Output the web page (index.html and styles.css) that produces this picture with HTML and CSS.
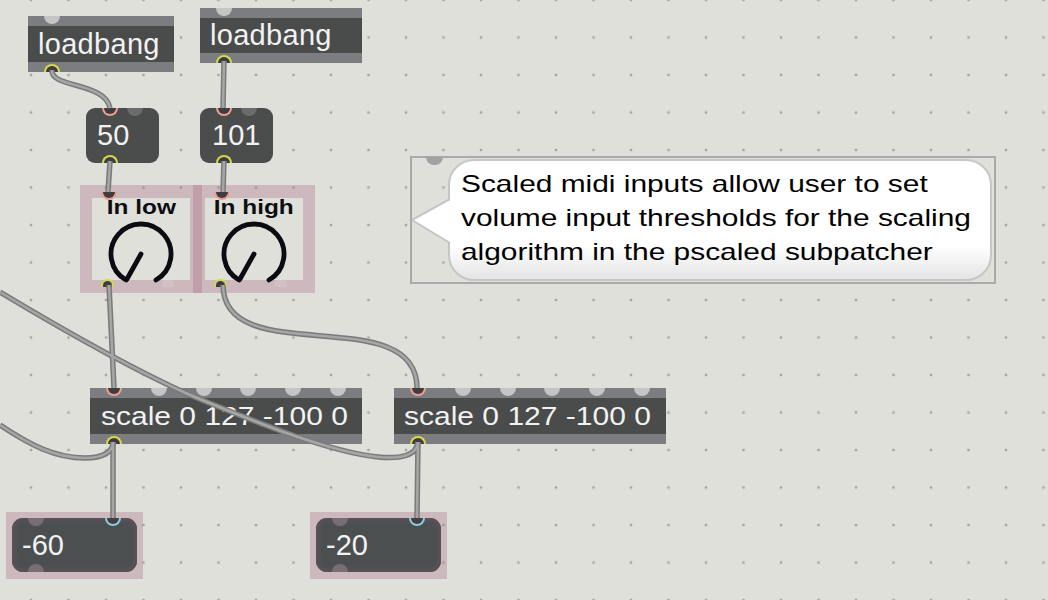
FILE: index.html
```html
<!DOCTYPE html>
<html lang="en">
<head>
<meta charset="UTF-8">
<title>pscaled patcher</title>
<link rel="stylesheet" href="styles.css">
</head>
<body>

<div class="patch">

  <!-- loadbang objects -->
  <div class="obj box lb1">
    <div class="bar"></div>
    <div class="label">loadbang</div>
    <div class="bar"></div>
    <div class="ports t"><span class="port hole"></span></div>
    <div class="ports b"><span class="port out"></span></div>
  </div>

  <div class="obj box lb2">
    <div class="bar"></div>
    <div class="label">loadbang</div>
    <div class="bar"></div>
    <div class="ports t"><span class="port hole"></span></div>
    <div class="ports b"><span class="port out"></span></div>
  </div>

  <!-- number boxes -->
  <div class="obj num n50">
    50
    <div class="ports t"><span class="port in"></span><span class="port dim"></span></div>
    <div class="ports b"><span class="port out"></span></div>
  </div>

  <div class="obj num n101">
    101
    <div class="ports t"><span class="port in"></span><span class="port dim"></span></div>
    <div class="ports b"><span class="port out"></span></div>
  </div>

  <!-- dials -->
  <div class="obj dial dial1">
    <div class="dial-name"><span>In low</span></div>
    <svg class="knob" width="98" height="62">
      <path d="M 34 63 A 30 30 0 1 1 64 63" />
      <path d="M 49 37 L 35 62" />
    </svg>
    <div class="ports t"><span class="port in"></span></div>
    <div class="ports b"><span class="port out"></span><span class="port ghost"></span></div>
  </div>

  <div class="obj dial dial2">
    <div class="dial-name"><span>In high</span></div>
    <svg class="knob" width="98" height="62">
      <path d="M 34 63 A 30 30 0 1 1 64 63" />
      <path d="M 49 37 L 35 62" />
    </svg>
    <div class="ports t"><span class="port in"></span></div>
    <div class="ports b"><span class="port out"></span><span class="port ghost"></span></div>
  </div>

  <!-- comment -->
  <div class="obj note">
    <div class="bubble">
      <p class="note-text">Scaled midi inputs allow user to set<br>volume input thresholds for the scaling<br>algorithm in the pscaled subpatcher</p>
    </div>
    <svg class="pointer" width="44" height="124">
      <polygon points="0,62 38,41 41,41 41,85 38,85" />
      <polyline points="38,41 0,62 38,85" />
    </svg>
    <div class="ports t"><span class="port grey"></span></div>
  </div>

  <!-- scale objects -->
  <div class="obj box sc sc1">
    <div class="bar"></div>
    <div class="label"><span>scale 0 127 -100 0</span></div>
    <div class="bar"></div>
    <div class="ports t">
      <span class="port in"></span><span class="port hole"></span><span class="port hole"></span>
      <span class="port hole"></span><span class="port hole"></span><span class="port hole"></span>
    </div>
    <div class="ports b"><span class="port out"></span></div>
  </div>

  <div class="obj box sc sc2">
    <div class="bar"></div>
    <div class="label"><span>scale 0 127 -100 0</span></div>
    <div class="bar"></div>
    <div class="ports t">
      <span class="port in"></span><span class="port hole"></span><span class="port hole"></span>
      <span class="port hole"></span><span class="port hole"></span><span class="port hole"></span>
    </div>
    <div class="ports b"><span class="port out"></span></div>
  </div>

  <!-- output numbers -->
  <div class="obj outnum o60">
    <div class="numbox">
      -60
      <div class="ports t"><span class="port faint"></span><span class="port blue"></span></div>
      <div class="ports b"><span class="port faint up"></span></div>
    </div>
  </div>

  <div class="obj outnum o20">
    <div class="numbox">
      -20
      <div class="ports t"><span class="port faint"></span><span class="port blue"></span></div>
      <div class="ports b"><span class="port faint up"></span></div>
    </div>
  </div>

  <!-- patch cords -->
  <svg class="cords" width="1048" height="600">
    <defs>
      <path id="c1" d="M 52 70 C 50 88, 105 82, 110 108" />
      <path id="c2" d="M 224 61 L 223 108" />
      <path id="c3" d="M 110 161 L 108 192" />
      <path id="c4" d="M 224 161 L 223 192" />
      <path id="c5" d="M 109 285 L 114 388" />
      <path id="c6" d="M 223 285 C 223 371, 417 300, 417 388" />
      <path id="c7" d="M 113 442 L 113 518" />
      <path id="c8" d="M 418 442 L 417 518" />
      <path id="c9" d="M 418 442 C 417 456, 400 459, 378 457 C 330 452, 260 424, 190 395 C 130 368, 60 328, 0 292" />
      <path id="c10" d="M 113 442 C 113 452, 103 458, 85 458 C 55 458, 30 445, 0 425" />
    </defs>
    <g class="cord-edge">
      <use href="#c1" /><use href="#c2" /><use href="#c3" /><use href="#c4" /><use href="#c5" />
      <use href="#c6" /><use href="#c7" /><use href="#c8" /><use href="#c9" /><use href="#c10" />
    </g>
    <g class="cord-core">
      <use href="#c1" /><use href="#c2" /><use href="#c3" /><use href="#c4" /><use href="#c5" />
      <use href="#c6" /><use href="#c7" /><use href="#c8" /><use href="#c9" /><use href="#c10" />
    </g>
  </svg>

</div>

</body>
</html>
```

FILE: styles.css
```css
body {
  margin: 0;
  background-color: #e0e0da;
  font-family: "Liberation Sans", Arial, sans-serif;
  overflow: hidden;
}
.patch {
  position: relative;
  width: 1048px;
  height: 600px;
  overflow: hidden;
  background-color: #e0e0da;
  background-image: radial-gradient(circle, #a6a6a0 1.1px, transparent 1.7px);
  background-size: 37.5px 37.5px;
  background-position: 12.25px -18.75px;
}
.obj {
  position: absolute;
  box-sizing: border-box;
}

/* boxes with bars (loadbang, scale) */
.box {
  display: flex;
  flex-direction: column;
  background: #4a4c4b;
}
.bar {
  height: 10px;
  background: #7c7d80;
}
.box .label {
  flex: 1;
  padding-left: 10px;
  color: #f2f2f2;
  font-size: 29px;
  letter-spacing: 0.3px;
  line-height: 36px;
  white-space: nowrap;
}
.lb1 { left: 28px; top: 16px; width: 146px; height: 56px; }
.lb2 { left: 200px; top: 8px; width: 162px; height: 55px; }
.lb2 .label { line-height: 35px; }

.sc { width: 272px; height: 56px; top: 388px; }
.sc1 { left: 90px; }
.sc2 { left: 394px; }
.sc .label {
  font-size: 25px;
  letter-spacing: 0;
  padding-left: 11px;
}
.sc2 .label { padding-left: 10px; }
.sc .label span {
  display: inline-block;
  transform: scaleX(1.2);
  transform-origin: left center;
}
.sc .ports.t { justify-content: space-between; }

/* ports */
.ports {
  position: absolute;
  left: 0;
  right: 0;
  display: flex;
  padding: 0 16px;
  gap: 9px;
}
.ports.t { top: 0; align-items: flex-start; }
.ports.b { bottom: 0; align-items: flex-end; }
.port {
  width: 16px;
  height: 8px;
  box-sizing: border-box;
  border-radius: 0 0 8px 8px;
}
.port.hole { background: #c5c5c5; }
.port.dim { background: #696b6c; }
.port.grey { width: 17px; height: 8px; background: #a2a2a2; }
.port.in {
  background: #3d3d40;
  border: 2px solid #ec9e8f;
  border-top: 0;
}
.port.blue {
  background: #453e44;
  border: 2px solid #8ecbdc;
  border-top: 0;
}
.port.out {
  background: #3d3d40;
  border: 2px solid #d5d74d;
  border-bottom: 0;
  border-radius: 8px 8px 0 0;
}
.port.faint { background: #7a6e75; }
.port.faint.up { border-radius: 8px 8px 0 0; }
.port.ghost {
  background: rgba(255, 255, 255, 0.12);
  border-radius: 8px 8px 0 0;
}

/* number boxes */
.num {
  background: #4b4d4d;
  border-radius: 9px;
  color: #f2f2f2;
  font-size: 29px;
  line-height: 55px;
  padding-left: 11px;
}
.n50 { left: 86px; top: 108px; width: 73px; height: 55px; }
.n101 { left: 200px; top: 108px; width: 73px; height: 55px; padding-left: 12px; }

/* dials */
.dial {
  top: 185px;
  height: 108px;
  border-style: solid;
  border-width: 13px 12px;
  border-color: rgba(170, 113, 135, 0.35);
  background: #e0e0da;
  background-clip: padding-box;
}
.dial1 { left: 80px; width: 122px; }
.dial2 { left: 193px; width: 122px; }
.dial-name {
  margin-top: -1px;
  height: 20px;
  text-align: center;
  font-size: 20px;
  font-weight: bold;
  line-height: 20px;
  color: #0d0d12;
  white-space: nowrap;
}
.dial-name span {
  display: inline-block;
  transform: scaleX(1.22);
}
.knob {
  display: block;
  overflow: visible;
}
.knob path {
  fill: none;
  stroke: #0b0b12;
  stroke-width: 4.8;
  stroke-linecap: round;
}
.dial .ports { padding-left: 9px; gap: 48px; }
.dial .ports.t { top: -6px; }
.dial .ports.b { bottom: -7px; }

/* comment */
.note {
  left: 410px;
  top: 156px;
  width: 586px;
  height: 128px;
  border: 2px solid #aaaaa6;
  padding: 1px 2px 1px 36px;
}
.note .ports { padding-left: 14px; top: -1px; }
.bubble {
  height: 100%;
  box-sizing: border-box;
  border: 2px solid #c6c6c6;
  border-radius: 26px;
  background: linear-gradient(#ffffff 72%, #e4e4e4);
  padding: 6px 0 0 11px;
}
.note-text {
  margin: 0;
  font-size: 24px;
  line-height: 34px;
  color: #000;
  white-space: nowrap;
  transform: scaleX(1.245);
  transform-origin: left top;
}
.pointer {
  position: absolute;
  left: 0;
  top: 0;
}
.pointer polygon { fill: #ffffff; }
.pointer polyline {
  fill: none;
  stroke: #c6c6c6;
  stroke-width: 2;
}

/* output numbers */
.outnum {
  top: 512px;
  width: 137px;
  height: 67px;
  padding: 6px 6px 7px;
  background: rgba(170, 113, 135, 0.35);
}
.o60 { left: 6px; }
.o20 { left: 310px; }
.numbox {
  position: relative;
  height: 100%;
  box-sizing: border-box;
  border-radius: 11px;
  background: #4c4f4f;
  box-shadow: inset 0 0 4px 3px #5c525a;
  color: #f2f2f2;
  font-size: 29px;
  line-height: 54px;
  padding-left: 10px;
}
.numbox .ports.t { justify-content: space-between; }

/* cords */
.cords {
  position: absolute;
  left: 0;
  top: 0;
  pointer-events: none;
}
.cords use { fill: none; }
.cord-edge use {
  stroke: #7a7a7a;
  stroke-width: 5.5;
}
.cord-core use {
  stroke: #a6a6a6;
  stroke-width: 2.5;
}
```
